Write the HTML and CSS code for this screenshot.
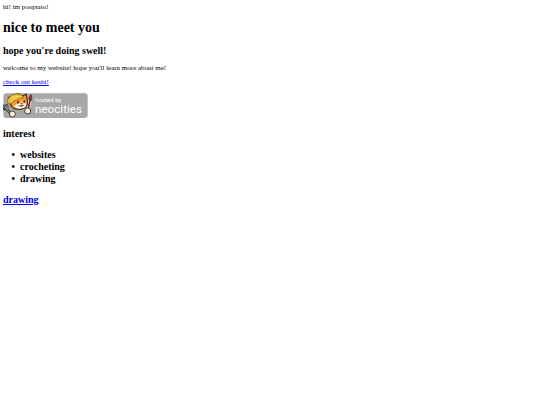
FILE: index.html
```html
<!DOCTYPE html>
<html lang="en">
<head>
  <meta charset="UTF-8">
  <title>pooptato</title>
  <link rel="stylesheet" href="styles.css">
</head>
<body>
  hi! im pooptato!
  <h1>nice to meet you</h1>
  <h2>hope you're doing swell!</h2>
  <p>welcome to my website! hope you'll learn more about me!</p>
  <p><a href="#keshi">check out keshi!</a></p>

  <a class="badge" href="#neocities" aria-label="hosted by neocities">
    <svg viewBox="0 0 255 75" width="85" height="25">
      <rect x="1" y="1" width="253" height="74" rx="9" fill="#a8a8a8"/>
      <!-- fork -->
      <g stroke-linecap="round" fill="none">
        <path d="M10 48 L25 63 M4 38 L10 48 M12 37 L13 47 M2 47 L10 49" stroke="#444" stroke-width="8"/>
        <path d="M10 48 L25 63 M4 38 L10 48 M12 37 L13 47" stroke="#ccc" stroke-width="2"/>
      </g>
      <!-- brush -->
      <path d="M75 48 L82 20" stroke="#ffffff" stroke-width="9"/>
      <path d="M75 48 L82 20" stroke="#64251f" stroke-width="5"/>
      <path d="M78 21 Q77 10 84 4 Q88 14 86 22 Z" fill="#a52f2b" stroke="#4c2020" stroke-width="2"/>
      <!-- cat -->
      <g transform="translate(1 0) scale(.9)">
        <path d="M24 22 L17 15 L27 12 Q37 1 53 4 L64 10 L76 4 L80 26 Q84 45 66 52 Q48 59 32 49 Q19 40 24 22 Z" fill="#f39a32" stroke="#4a3420" stroke-width="4"/>
        <path d="M43 38 Q50 33 57 34 L62 26 L67 33 Q78 33 76 41 Q71 52 58 52 Q42 53 35 44 Z" fill="#fff6e6"/>
        <path d="M13 33 Q13 9 40 3 Q61 1 68 16 Q52 16 43 25 Q32 24 29 37 Z" fill="#edbd35" stroke="#6e5120" stroke-width="2"/>
        <path d="M26 20 Q40 10 58 12 M31 10 L41 22" fill="none" stroke="#f8dc70" stroke-width="3"/>
        <ellipse cx="49" cy="31" rx="3" ry="4" fill="#392820"/>
        <ellipse cx="70" cy="28" rx="3" ry="4" fill="#392820"/>
        <path d="M58 35 L65 34 L62 39 Z M50 42 Q61 49 70 40" fill="#bd4a33" stroke="#704030" stroke-width="2"/>
      </g>
      <!-- paws -->
      <circle cx="28" cy="63" r="9" fill="#fff4e2" stroke="#4b4032" stroke-width="3"/>
      <circle cx="74" cy="54" r="9" fill="#fff4e2" stroke="#4b4032" stroke-width="3"/>
      <text class="hosted" x="97" y="28">hosted by</text>
      <text class="name" x="96" y="60">neocities</text>
    </svg>
  </a>

  <h2>interest</h2>
  <ul>
    <li>websites</li>
    <li>crocheting</li>
    <li>drawing</li>
  </ul>
  <h2><a href="#drawing">drawing</a></h2>
</body>
</html>
```
FILE: styles.css
```css
body {
  margin: 3px;
  font-family: "Liberation Serif", "Times New Roman", serif;
  font-size: 7px;
  line-height: 8px;
  background-color: white;
  color: black;
}
h1 {
  margin: 9px 0 8px;
  font-size: 14px;
  line-height: 16px;
}
h2 {
  margin: 7px 0;
  font-size: 10px;
  line-height: 13px;
}
p {
  margin: 6px 0;
}
a {
  color: #0000ee;
}
.badge {
  display: block;
  width: 85px;
  margin: 7px 0 9px;
}
.badge svg {
  display: block;
}
.hosted,
.name {
  font-family: Roboto, "Noto Sans", sans-serif;
  fill: white;
}
.hosted {
  font-size: 18px;
}
.name {
  font-size: 35px;
}
ul {
  margin: 9px 0 8px;
  padding-left: 17px;
  list-style-type: "•\00a0\00a0";
  font-size: 10px;
  font-weight: bold;
  line-height: 12px;
}
```
